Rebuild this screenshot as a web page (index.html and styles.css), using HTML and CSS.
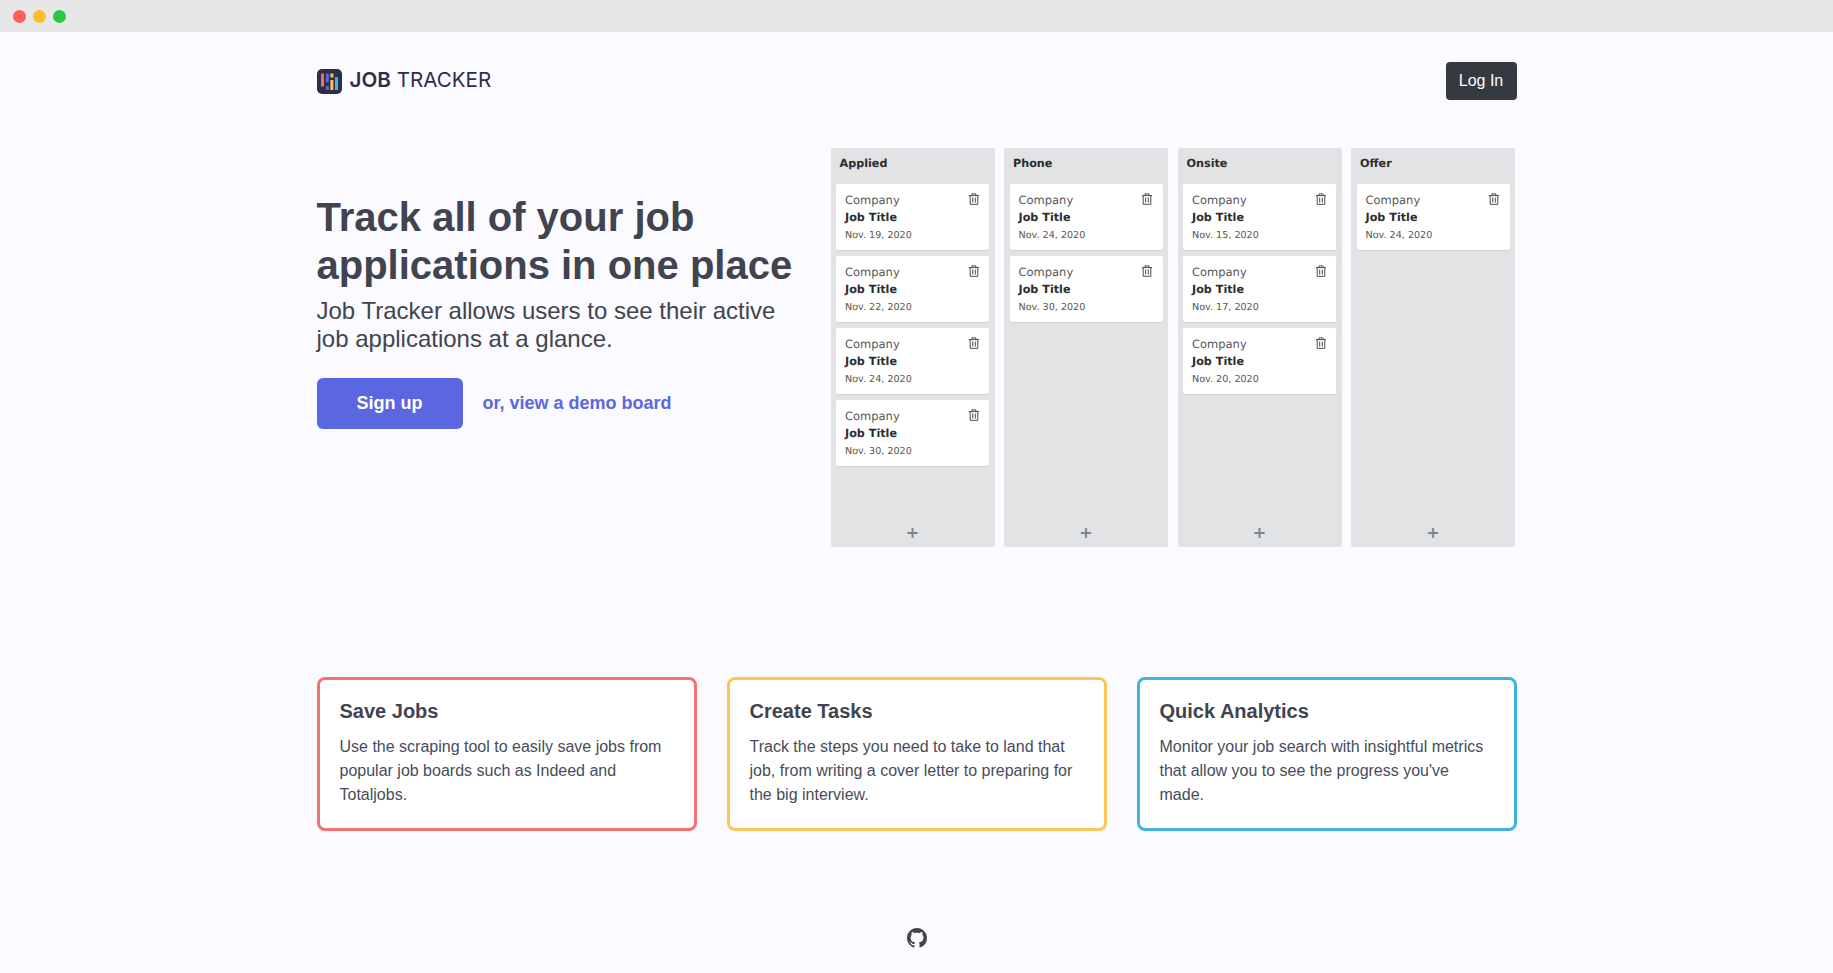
FILE: index.html
```html
<!DOCTYPE html>
<html lang="en">
<head>
  <meta charset="UTF-8">
  <title>Job Tracker</title>
  <link rel="stylesheet" href="styles.css">
</head>
<body>
  <div class="titlebar">
    <span class="dot dot-red"></span>
    <span class="dot dot-yellow"></span>
    <span class="dot dot-green"></span>
  </div>

  <div class="page">
    <header class="topnav">
      <a class="brand" href="#">
        <svg class="brand-logo" viewBox="0 0 25 25" width="25" height="25">
          <rect width="25" height="25" rx="5" fill="#2f2e4a"/>
          <rect x="4" y="4.5" width="3" height="13" fill="#f56b72"/>
          <rect x="8.8" y="4.5" width="3" height="9" fill="#5a67d8"/>
          <rect x="8.8" y="17" width="3" height="4" fill="#5a67d8"/>
          <rect x="13.4" y="4.5" width="3" height="4" fill="#fbc05a"/>
          <rect x="13.4" y="11" width="3" height="10" fill="#fbc05a"/>
          <rect x="18" y="8" width="3" height="13" fill="#41b3e0"/>
        </svg>
        <span class="brand-name"><b>JOB</b> TRACKER</span>
      </a>
      <button class="login">Log In</button>
    </header>

    <section class="hero">
      <div class="hero-text">
        <h1>Track all of your job applications in one place</h1>
        <p class="lead">Job Tracker allows users to see their active job applications at a glance.</p>
        <div class="actions">
          <a class="signup" href="#">Sign up</a>
          <a class="demo" href="#">or, view a demo board</a>
        </div>
      </div>

      <div class="board">
        <div class="column">
          <h4>Applied</h4>
          <div class="cards">
            <div class="card">
              <div class="company">Company</div>
              <div class="job">Job Title</div>
              <div class="date">Nov. 19, 2020</div>
              <svg class="trash" viewBox="0 0 12 12"><use href="#trash"/></svg>
            </div>
            <div class="card">
              <div class="company">Company</div>
              <div class="job">Job Title</div>
              <div class="date">Nov. 22, 2020</div>
              <svg class="trash" viewBox="0 0 12 12"><use href="#trash"/></svg>
            </div>
            <div class="card">
              <div class="company">Company</div>
              <div class="job">Job Title</div>
              <div class="date">Nov. 24, 2020</div>
              <svg class="trash" viewBox="0 0 12 12"><use href="#trash"/></svg>
            </div>
            <div class="card">
              <div class="company">Company</div>
              <div class="job">Job Title</div>
              <div class="date">Nov. 30, 2020</div>
              <svg class="trash" viewBox="0 0 12 12"><use href="#trash"/></svg>
            </div>
          </div>
          <div class="add">+</div>
        </div>

        <div class="column">
          <h4>Phone</h4>
          <div class="cards">
            <div class="card">
              <div class="company">Company</div>
              <div class="job">Job Title</div>
              <div class="date">Nov. 24, 2020</div>
              <svg class="trash" viewBox="0 0 12 12"><use href="#trash"/></svg>
            </div>
            <div class="card">
              <div class="company">Company</div>
              <div class="job">Job Title</div>
              <div class="date">Nov. 30, 2020</div>
              <svg class="trash" viewBox="0 0 12 12"><use href="#trash"/></svg>
            </div>
          </div>
          <div class="add">+</div>
        </div>

        <div class="column">
          <h4>Onsite</h4>
          <div class="cards">
            <div class="card">
              <div class="company">Company</div>
              <div class="job">Job Title</div>
              <div class="date">Nov. 15, 2020</div>
              <svg class="trash" viewBox="0 0 12 12"><use href="#trash"/></svg>
            </div>
            <div class="card">
              <div class="company">Company</div>
              <div class="job">Job Title</div>
              <div class="date">Nov. 17, 2020</div>
              <svg class="trash" viewBox="0 0 12 12"><use href="#trash"/></svg>
            </div>
            <div class="card">
              <div class="company">Company</div>
              <div class="job">Job Title</div>
              <div class="date">Nov. 20, 2020</div>
              <svg class="trash" viewBox="0 0 12 12"><use href="#trash"/></svg>
            </div>
          </div>
          <div class="add">+</div>
        </div>

        <div class="column">
          <h4>Offer</h4>
          <div class="cards">
            <div class="card">
              <div class="company">Company</div>
              <div class="job">Job Title</div>
              <div class="date">Nov. 24, 2020</div>
              <svg class="trash" viewBox="0 0 12 12"><use href="#trash"/></svg>
            </div>
          </div>
          <div class="add">+</div>
        </div>
      </div>
    </section>

    <section class="features">
      <div class="feature feature-red">
        <h3>Save Jobs</h3>
        <p>Use the scraping tool to easily save jobs from popular job boards such as Indeed and Totaljobs.</p>
      </div>
      <div class="feature feature-yellow">
        <h3>Create Tasks</h3>
        <p>Track the steps you need to take to land that job, from writing a cover letter to preparing for the big interview.</p>
      </div>
      <div class="feature feature-blue">
        <h3>Quick Analytics</h3>
        <p>Monitor your job search with insightful metrics that allow you to see the progress you've made.</p>
      </div>
    </section>

    <footer class="foot">
      <svg viewBox="0 0 16 16" width="20" height="20" fill="#41444f">
        <path d="M8 0C3.58 0 0 3.58 0 8c0 3.54 2.29 6.53 5.47 7.59.4.07.55-.17.55-.38 0-.19-.01-.82-.01-1.49-2.01.37-2.53-.49-2.69-.94-.09-.23-.48-.94-.82-1.13-.28-.15-.68-.52-.01-.53.63-.01 1.08.58 1.23.82.72 1.21 1.87.87 2.33.66.07-.52.28-.87.51-1.07-1.78-.2-3.64-.89-3.64-3.95 0-.87.31-1.59.82-2.15-.08-.2-.36-1.02.08-2.12 0 0 .67-.21 2.2.82.64-.18 1.32-.27 2-.27.68 0 1.36.09 2 .27 1.53-1.04 2.2-.82 2.2-.82.44 1.1.16 1.92.08 2.12.51.56.82 1.27.82 2.15 0 3.07-1.87 3.75-3.65 3.95.29.25.54.73.54 1.48 0 1.07-.01 1.93-.01 2.2 0 .21.15.46.55.38A8.01 8.01 0 0 0 16 8c0-4.42-3.58-8-8-8z"/>
      </svg>
    </footer>
  </div>

  <svg class="defs" width="0" height="0">
    <symbol id="trash" viewBox="0 0 12 12">
      <path d="M1 2.6h10M4 2.4V.9h4v1.5M2.2 2.8v8.5h7.6V2.8M4.7 4.5v5M7.3 4.5v5" fill="none" stroke="#4b4b4b" stroke-width="1"/>
    </symbol>
  </svg>
</body>
</html>
```

FILE: styles.css
```css
* {
  box-sizing: border-box;
}

html, body {
  margin: 0;
  height: 100%;
  overflow: hidden;
}

body {
  font-family: "Liberation Sans", Arial, sans-serif;
  background-color: #fafaff;
  color: #41444f;
}

a {
  text-decoration: none;
}

.titlebar {
  height: 32px;
  background-color: #e7e7e7;
  display: flex;
  align-items: center;
  gap: 7px;
  padding: 0 0 0 13px;
}

.dot {
  width: 13px;
  height: 13px;
  border-radius: 50%;
}

.dot-red { background-color: #ff5f57; }
.dot-yellow { background-color: #febc2e; }
.dot-green { background-color: #28c840; }

.page {
  width: 1200px;
  margin: 0 auto;
}

.topnav {
  display: flex;
  justify-content: space-between;
  align-items: center;
  padding-top: 30px;
  height: 68px;
}

.brand {
  display: flex;
  align-items: center;
  gap: 8px;
  color: #2f2e4a;
  font-family: "Inter", sans-serif;
  font-size: 20.6px;
}

.brand-logo {
  display: block;
}

.brand-name {
  position: relative;
  top: -2px;
}

.brand-name b {
  font-weight: 600;
}

.login {
  width: 71px;
  height: 38px;
  border: none;
  border-radius: 4px;
  background-color: #343a40;
  color: #fff;
  font-family: inherit;
  font-size: 16px;
}

.hero {
  display: flex;
  margin-top: 48px;
}

.hero-text {
  width: 514px;
  padding-top: 45px;
}

h1 {
  margin: 0;
  font-size: 40px;
  line-height: 48px;
  font-weight: 700;
}

.lead {
  margin: 8px 0 0;
  font-size: 24px;
  line-height: 28px;
  width: 480px;
}

.actions {
  display: flex;
  align-items: center;
  gap: 20px;
  margin-top: 25px;
}

.signup {
  width: 146px;
  height: 51px;
  line-height: 51px;
  border-radius: 6px;
  background-color: #5a67e0;
  color: #fff;
  text-align: center;
  font-size: 18px;
  font-weight: 700;
}

.demo {
  color: #5a67e0;
  font-size: 18px;
  font-weight: 700;
}

.board {
  display: flex;
  gap: 9.5px;
  font-family: "DejaVu Sans", sans-serif;
  text-rendering: geometricPrecision;
}

.column {
  width: 164px;
  height: 399px;
  background-color: #e2e3e5;
  border-radius: 2px;
  padding: 0 5.5px;
  display: flex;
  flex-direction: column;
}

.column h4 {
  margin: 0;
  padding: 9px 3.5px 0;
  height: 36px;
  font-size: 11.2px;
  line-height: 14px;
  font-weight: 700;
  color: #2d2d2d;
}

.cards {
  flex: 1;
  display: flex;
  flex-direction: column;
  gap: 6.6px;
}

.card {
  position: relative;
  height: 65.5px;
  padding: 7.5px 9px;
  background-color: #fff;
  border-radius: 2px;
  box-shadow: 0 1px 1px rgba(0, 0, 0, 0.08);
}

.company {
  font-size: 11.5px;
  line-height: 16px;
  color: #555;
}

.job {
  font-size: 11.2px;
  line-height: 19px;
  font-weight: 700;
  color: #2d2d2d;
}

.date {
  margin-top: 1px;
  font-size: 9.6px;
  line-height: 15px;
  color: #555;
}

.trash {
  position: absolute;
  top: 9px;
  right: 9.5px;
  width: 12px;
  height: 12px;
}

.add {
  height: 29px;
  line-height: 29px;
  text-align: center;
  font-size: 16px;
  font-weight: 700;
  color: #7c858d;
}

.features {
  display: flex;
  justify-content: space-between;
  margin-top: 130px;
}

.feature {
  width: 380px;
  height: 154px;
  padding: 20px;
  background-color: #fff;
  border: 3px solid;
  border-radius: 8px;
}

.feature-red { border-color: #f87171; }
.feature-yellow { border-color: #fbc55a; }
.feature-blue { border-color: #41b3e0; }

.feature h3 {
  margin: -1px 0 0;
  font-size: 20px;
  line-height: 24px;
  font-weight: 700;
}

.feature p {
  margin: 12px 0 0;
  font-size: 16px;
  line-height: 24px;
  color: #484c5a;
}

.foot {
  display: flex;
  justify-content: center;
  margin-top: 97px;
}

.defs {
  position: absolute;
}
```
